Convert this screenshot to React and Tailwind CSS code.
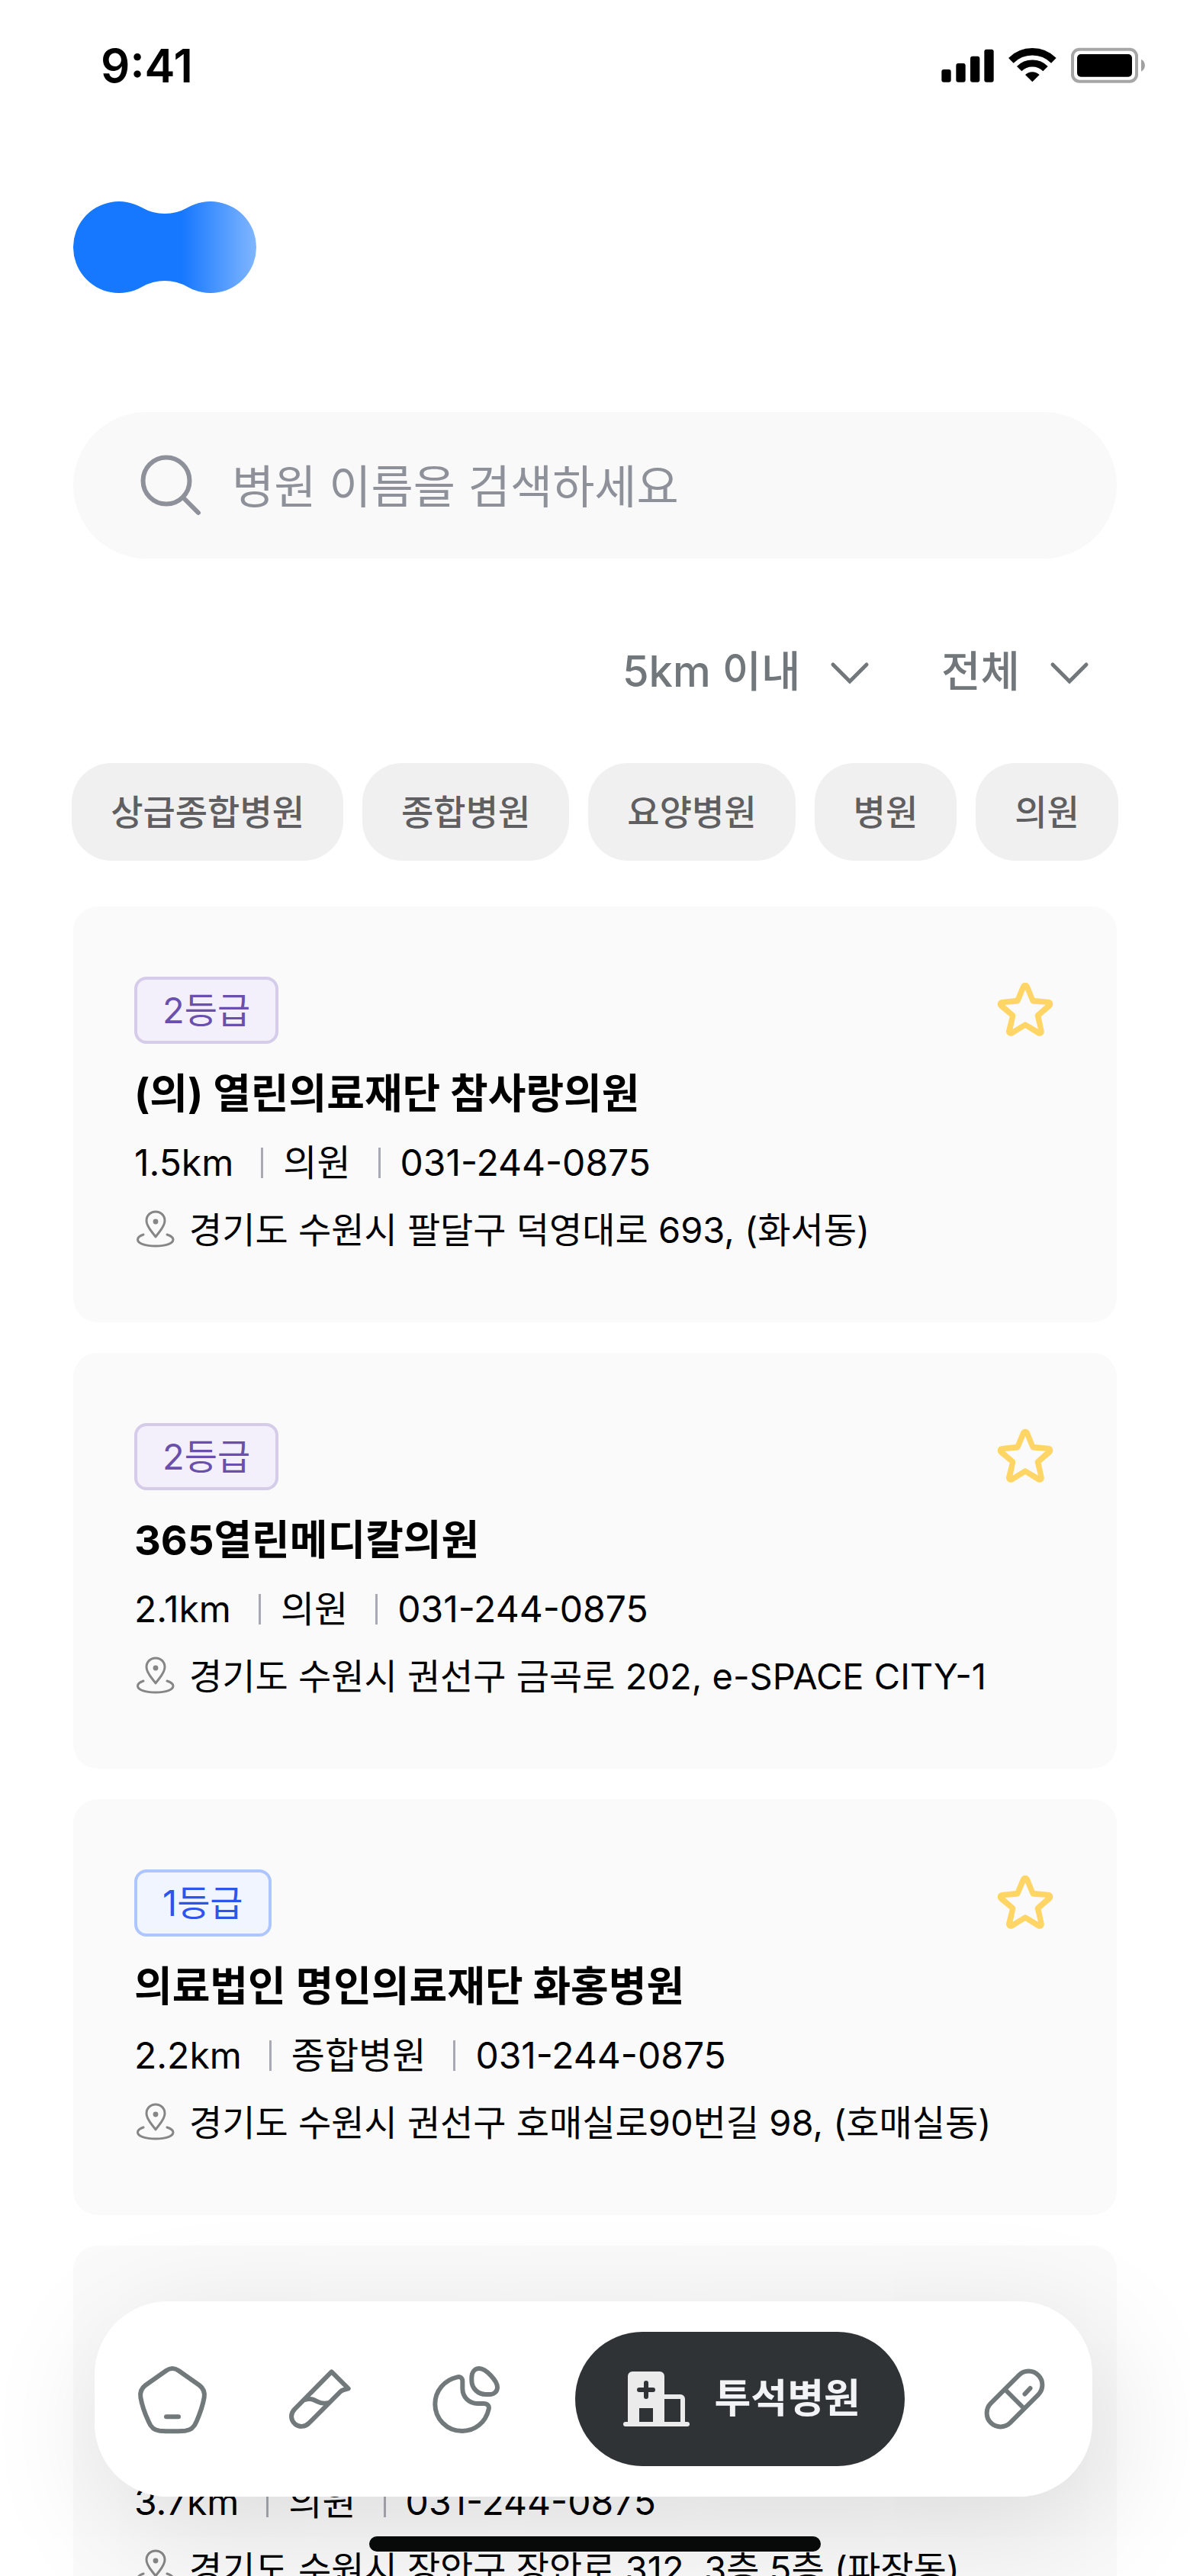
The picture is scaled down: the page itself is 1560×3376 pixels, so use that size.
import React from "react";

const hospitals = [
  { id: 1, grade: 2, name: "(의) 열린의료재단 참사랑의원", distance: "1.5km", type: "의원", phone: "031-244-0875", address: "경기도 수원시 팔달구 덕영대로 693, (화서동)" },
  { id: 2, grade: 2, name: "365열린메디칼의원", distance: "2.1km", type: "의원", phone: "031-244-0875", address: "경기도 수원시 권선구 금곡로 202, e-SPACE CITY-1" },
  { id: 3, grade: 1, name: "의료법인 명인의료재단 화홍병원", distance: "2.2km", type: "종합병원", phone: "031-244-0875", address: "경기도 수원시 권선구 호매실로90번길 98, (호매실동)" },
  { id: 4, distance: "3.7km", type: "의원", phone: "031-244-0875", address: "경기도 수원시 장안구 장안로 312, 3층 5층 (파장동)" },
];

const categories = ["상급종합병원", "종합병원", "요양병원", "병원", "의원"];

const gradeStyles = {
  1: "border-[#adc6ff] bg-[#f0f5ff] text-[#2f54eb]",
  2: "border-[#d4cce8] bg-[#f3f0fb] text-[#6a50ac]",
};

function StatusIcons() {
  return (
    <svg className="h-12 w-[268px]" viewBox="222 130 804 144" aria-hidden="true">
      <rect x="223" y="217" width="37" height="50" rx="9" />
      <rect x="280" y="193" width="37" height="74" rx="9" />
      <rect x="336" y="165" width="37" height="102" rx="9" />
      <rect x="391" y="138" width="37" height="129" rx="9" />
      <path d="M496 182A119 119 0 0 1 664 182" fill="none" stroke="#000" strokeWidth="28" />
      <path d="M528.5 214.5A73 73 0 0 1 631.5 214.5" fill="none" stroke="#000" strokeWidth="27" />
      <path d="M580 266L552 238A40 40 0 0 1 608 238Z" />
      <rect x="738" y="138" width="252" height="126" rx="27" fill="none" stroke="#a6a6a6" strokeWidth="12" />
      <rect x="756" y="157" width="216" height="89" rx="15" />
      <path d="M1008 177A27 27 0 0 1 1008 225Z" fill="#a0a0a0" />
    </svg>
  );
}

function Logo() {
  return (
    <svg className="block h-30 w-60" viewBox="0 0 240 120" role="img" aria-label="로고">
      <defs>
        <linearGradient id="logoFade" x1="0" y1="0" x2="1" y2="0">
          <stop offset="0.59" stopColor="#1677ff" />
          <stop offset="1" stopColor="#80b6ff" />
        </linearGradient>
      </defs>
      <path
        d="M90 8.04A60 60 0 0 0 150 8.04A60 60 0 1 1 150 111.96A60 60 0 0 0 90 111.96A60 60 0 1 1 90 8.04Z"
        fill="url(#logoFade)"
      />
    </svg>
  );
}

function Chevron() {
  return (
    <svg className="size-16" viewBox="0 0 64 64" fill="none" stroke="#71777a" strokeWidth="5" strokeLinecap="round" aria-hidden="true">
      <path d="M10 23L32 45L54 23" />
    </svg>
  );
}

function FilterSelect({ label, options }) {
  return (
    <label className="flex items-center gap-8">
      <select
        aria-label={label}
        className="h-20 appearance-none bg-transparent text-[56px] leading-20 font-medium text-[#71777a] outline-none"
      >
        {options.map((o) => (
          <option key={o}>{o}</option>
        ))}
      </select>
      <Chevron />
    </label>
  );
}

function Star() {
  return (
    <svg className="size-20" viewBox="612 372 240 240" aria-hidden="true">
      <path
        fill="#ffd566"
        fillRule="evenodd"
        d="M714 396C721 379 743 379 750 396L769 444L824 449C840 450 848 470 833 484L794 517L806 572C809 587 794 599 779 591L732 562L685 591C671 599 655 587 657 573L671 517L631 484C617 470 624 451 640 450L694 444ZM732 411L713 457C710 464 706 467 698 467L652 471L689 503C694 508 695 511 693 518L683 566L726 540Q732 536 738 540L783 566L771 518C769 511 770 508 775 503L812 470L766 467C758 467 754 464 751 457Z"
      />
    </svg>
  );
}

function Pin() {
  return (
    <svg className="size-14 shrink-0" viewBox="0 0 56 56" fill="none" stroke="#868686" strokeWidth="3" strokeLinecap="round" strokeLinejoin="round" aria-hidden="true">
      <path d="M28 37C24 31 16 24 16 16C16 9 21 4 28 4C35 4 40 9 40 16C40 24 32 31 28 37Z" />
      <circle cx="28" cy="17" r="3.4" fill="#868686" stroke="none" />
      <path d="M12 34C6 36 4.5 38.500 4.500 40.500C4.500 45.500 14 49 28 49C42 49 51 45.500 51 40.500C51 38.500 49 36 43 34" />
    </svg>
  );
}

function Divider() {
  return <span className="mr-[26px] ml-9 h-10 w-[3px] bg-[#a9a9b3]" />;
}

function HospitalCard({ hospital }) {
  return (
    <li className="rounded-4xl bg-[#fafafa] px-20 pt-23 pb-[85px]">
      <div className="flex h-22 items-center justify-between">
        {hospital.grade && (
          <>
            <span className={`flex h-22 items-center rounded-2xl border-4 px-[33px] text-[47px] ${gradeStyles[hospital.grade]}`}>
              {hospital.grade}등급
            </span>
            <button type="button" aria-label="즐겨찾기">
              <Star />
            </button>
          </>
        )}
      </div>
      <h2 className="mt-[26px] h-20 text-[54px] leading-20 font-bold">{hospital.name}</h2>
      <p className="mt-[14px] flex h-18 items-center text-[48px] leading-18">
        <span>{hospital.distance}</span>
        <Divider />
        <span>{hospital.type}</span>
        <Divider />
        <span>{hospital.phone}</span>
      </p>
      <p className="mt-4 flex h-18 items-center gap-4 text-[47px] leading-18">
        <Pin />
        <span>{hospital.address}</span>
      </p>
    </li>
  );
}

function NavIcon({ viewBox, strokeWidth, children }) {
  return (
    <svg className="size-24" viewBox={viewBox} fill="none" stroke="#72797b" strokeWidth={strokeWidth} strokeLinecap="round" strokeLinejoin="round" aria-hidden="true">
      {children}
    </svg>
  );
}

function BottomNav() {
  return (
    <nav className="fixed right-32 bottom-26 left-31 flex h-64 items-center justify-between rounded-[96px] bg-white px-[54px] shadow-[16px_40px_160px_rgba(0,0,0,0.13)]">
      <a href="#home" aria-label="홈">
        <NavIcon viewBox="24 18 288 288" strokeWidth="18">
          <path d="M143 51C160 39 176 39 193 51L274 108C290 120 296 136 293 156C288 185 276 220 263 250C253 275 240 285 218 287C185 289 150 289 118 287C96 285 84 275 74 250C60 220 48 185 43 156C40 136 46 120 62 108Z" />
          <path d="M144 232H192" />
        </NavIcon>
      </a>
      <a href="#test" aria-label="검사">
        <NavIcon viewBox="600 18 288 288" strokeWidth="18">
          <path d="M794 55L860 121L842 126C835 128 832 130 828 134L705 257C690 273 664 274 649 259C632 243 632 220 648 203Z" />
          <path d="M688 165C712 158 722 164 740 173C752 180 765 180 780 178" />
        </NavIcon>
      </a>
      <a href="#diet" aria-label="식단">
        <NavIcon viewBox="1176 18 288 288" strokeWidth="18">
          <path d="M1288 76C1300 72 1309 80 1309 92L1309 121C1309 155 1335 180 1368 180L1392 180C1407 180 1415 189 1412 202C1400 255 1357 288 1308 288C1247 288 1201 240 1201 182C1201 130 1238 87 1288 76Z" />
          <path d="M1345 78C1345 55 1358 42 1375 42C1400 42 1446 90 1446 116C1446 132 1433 144 1416 144L1400 144C1370 144 1345 120 1345 90Z" />
        </NavIcon>
      </a>
      <a href="#hospital" aria-current="page" className="flex h-44 items-center gap-7 rounded-full bg-[#2f3336] px-[58px] text-[52px] font-bold text-[#f1f3f5]">
        <svg className="size-24" viewBox="0 0 96 96" aria-hidden="true">
          <path fill="#ebebeb" fillRule="evenodd" d="M11 80V18A6 6 0 0 1 17 12H53A6 6 0 0 1 59 18V80ZM26 60V79H44V60Z" />
          <path d="M58 45H80A3 3 0 0 1 83 48V80" fill="none" stroke="#ebebeb" strokeWidth="6" />
          <path d="M8 81H89" stroke="#ebebeb" strokeWidth="6" strokeLinecap="round" />
          <path d="M26 36H44M35 27V45" stroke="#2f3336" strokeWidth="6" strokeLinecap="round" />
        </svg>
        투석병원
      </a>
      <a href="#medicine" aria-label="약">
        <NavIcon viewBox="0 0 96 96" strokeWidth="6">
          <rect x="4" y="30" width="88" height="36" rx="18" transform="rotate(-45 48 48)" />
          <path d="M36 36L60 60M68.500 34L61.500 41.500" />
        </NavIcon>
      </a>
    </nav>
  );
}

export default function App() {
  return (
    <div className="h-screen overflow-hidden bg-white font-['Inter','Noto_Sans_CJK_KR',sans-serif] text-black">
      <header>
        <div className="flex h-43 items-center justify-between pr-[58px] pl-33">
          <time className="text-[60px] font-semibold">9:41</time>
          <StatusIcons />
        </div>
        <div className="px-24 pt-23">
          <Logo />
        </div>
      </header>
      <main className="px-24">
        <label className="mt-39 flex h-48 items-center gap-10 rounded-full bg-[#f9f9f9] px-22">
          <svg className="size-20 shrink-0" viewBox="0 0 80 80" fill="none" stroke="#8e9199" strokeWidth="6" strokeLinecap="round" aria-hidden="true">
            <circle cx="34" cy="34" r="30.500" />
            <path d="M57 57L76 76" />
          </svg>
          <input
            type="search"
            aria-label="병원 검색"
            placeholder="병원 이름을 검색하세요"
            className="h-24 min-w-0 flex-1 bg-transparent pt-1 text-[60px] outline-none placeholder:text-[#8e9199]"
          />
        </label>
        <div className="mt-27 flex justify-end gap-22 pr-[30px]">
          <FilterSelect label="거리" options={["5km 이내"]} />
          <FilterSelect label="종류" options={["전체"]} />
        </div>
        <div className="mt-20 flex justify-center gap-[25px]">
          {categories.map((c) => (
            <button key={c} type="button" className="h-32 shrink-0 rounded-[52px] bg-[#f0f0f0] px-[51px] text-[46px] font-medium text-[#5f5f62]">
              {c}
            </button>
          ))}
        </div>
        <ul className="mt-15 flex flex-col gap-10">
          {hospitals.map((h) => (
            <HospitalCard key={h.id} hospital={h} />
          ))}
        </ul>
      </main>
      <BottomNav />
      <div className="fixed bottom-8 left-1/2 h-5 w-148 -translate-x-1/2 rounded-full bg-[#080a0a]" />
    </div>
  );
}
